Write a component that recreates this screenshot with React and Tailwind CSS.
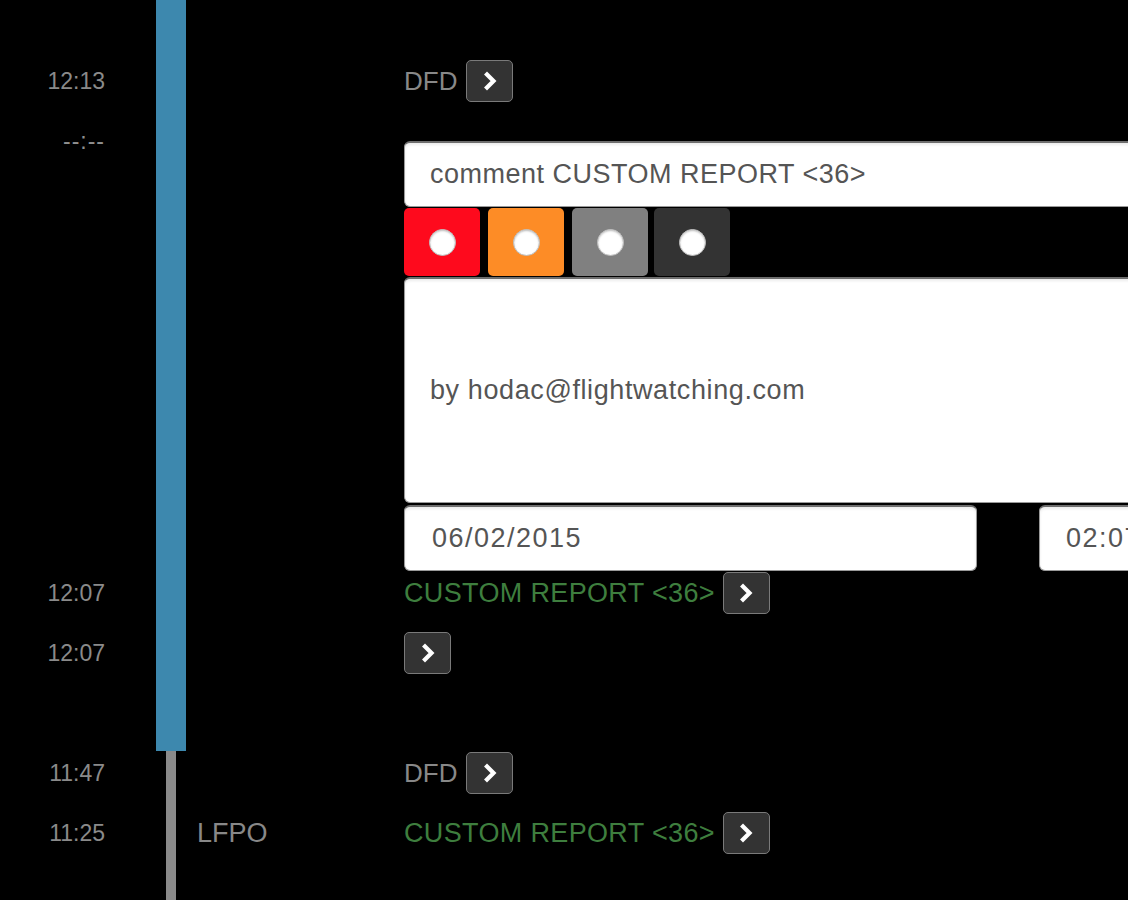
const sans = "font-['Liberation_Sans',Arial,sans-serif]";

function GoButton() {
  return (
    <span className="inline-flex items-center justify-center w-[47px] h-[42px] rounded-[5px] border border-[#7a7a7a] bg-[#333] align-middle">
      <svg width="18" height="20" viewBox="0 0 18 20">
        <polyline points="6,3.5 12.5,10 6,16.5" fill="none" stroke="#fff" strokeWidth="4.2" strokeLinecap="square" strokeLinejoin="miter" />
      </svg>
    </span>
  );
}

function Swatch({ color }) {
  return (
    <div className={`w-[76px] h-[68px] rounded-[5px] flex items-center justify-center ${color}`}>
      <span className="w-[27px] h-[27px] rounded-full bg-white border border-[#bbb] shadow-[inset_0_1px_2px_rgba(0,0,0,0.25)]" />
    </div>
  );
}

const field = 'rounded-[6px] bg-white border border-[#999] border-t-2 border-t-[#6e6e6e] shadow-[inset_0_2px_3px_rgba(0,0,0,0.08)] flex items-center text-[27px] text-[#555]';

export default function App() {
  return (
    <div className={`w-[1128px] h-[900px] overflow-hidden bg-black ${sans}`}>
      <div className="grid h-[900px] grid-cols-[105px_51px_30px_218px_1fr] grid-rows-[51px_60px_auto_44px_76px_52px_60px_60px_1fr]">
        {/* timeline bar */}
        <div className="col-start-3 row-span-full flex flex-col">
          <div className="h-[751px] w-[30px] bg-[#3d88ae]" />
          <div className="flex-1 w-[10px] ml-[10px] bg-[#8a8a8a]" />
        </div>

        {/* 12:13 */}
        <div className="row-start-2 col-start-1 flex items-center justify-end text-[23px] text-[#8a8a8a]">12:13</div>
        <div className="row-start-2 col-start-5 flex items-center gap-[9px] text-[26px] text-[#888]">
          <span>DFD</span>
          <GoButton />
        </div>

        {/* comment form */}
        <div className="row-start-3 col-start-1 h-[60px] flex items-center justify-end text-[23px] text-[#8f8f8f] tracking-[1px]">--:--</div>
        <div className="row-start-3 col-start-5 pt-[30px] min-w-0">
          <div className="w-[1250px] flex flex-col">
            <div className={`h-[66px] pl-[25px] tracking-[0.5px] ${field}`}>
              comment CUSTOM REPORT &lt;36&gt;
            </div>
            <div className="flex gap-2 mt-px">
              <Swatch color="bg-[#fe0a1d]" />
              <Swatch color="bg-[#fd8c26]" />
              <Swatch color="bg-[#808080]" />
              <Swatch color="bg-[#333333] -ml-[2px]" />
            </div>
            <div className={`h-[226px] mt-px pl-[25px] tracking-[0.6px] ${field}`}>
              by hodac@flightwatching.com
            </div>
            <div className="flex gap-[62px] mt-[2px]">
              <div className={`w-[573px] h-[66px] pl-[27px] tracking-[1.5px] ${field}`}>
                06/02/2015
              </div>
              <div className={`w-[573px] h-[66px] pl-[26px] tracking-[1.5px] ${field}`}>
                02:07
              </div>
            </div>
          </div>
        </div>

        {/* 12:07 custom report */}
        <div className="row-start-4 col-start-1 flex items-center justify-end text-[23px] text-[#8a8a8a]">12:07</div>
        <div className="row-start-4 col-start-5 flex items-center gap-2 text-[27px] text-[#3e7e3e] whitespace-nowrap">
          <span className="tracking-[0.35px]">CUSTOM REPORT &lt;36&gt;</span>
          <GoButton />
        </div>

        {/* 12:07 empty */}
        <div className="row-start-5 col-start-1 flex items-center justify-end text-[23px] text-[#8a8a8a]">12:07</div>
        <div className="row-start-5 col-start-5 flex items-center">
          <GoButton />
        </div>

        {/* 11:47 */}
        <div className="row-start-7 col-start-1 flex items-center justify-end text-[23px] text-[#8a8a8a]">11:47</div>
        <div className="row-start-7 col-start-5 flex items-center gap-[9px] text-[26px] text-[#888]">
          <span>DFD</span>
          <GoButton />
        </div>

        {/* 11:25 */}
        <div className="row-start-8 col-start-1 flex items-center justify-end text-[23px] text-[#8a8a8a]">11:25</div>
        <div className="row-start-8 col-start-4 flex items-center pl-[11px] text-[27px] text-[#888]">LFPO</div>
        <div className="row-start-8 col-start-5 flex items-center gap-2 text-[27px] text-[#3e7e3e] whitespace-nowrap">
          <span className="tracking-[0.35px]">CUSTOM REPORT &lt;36&gt;</span>
          <GoButton />
        </div>
      </div>
    </div>
  );
}
